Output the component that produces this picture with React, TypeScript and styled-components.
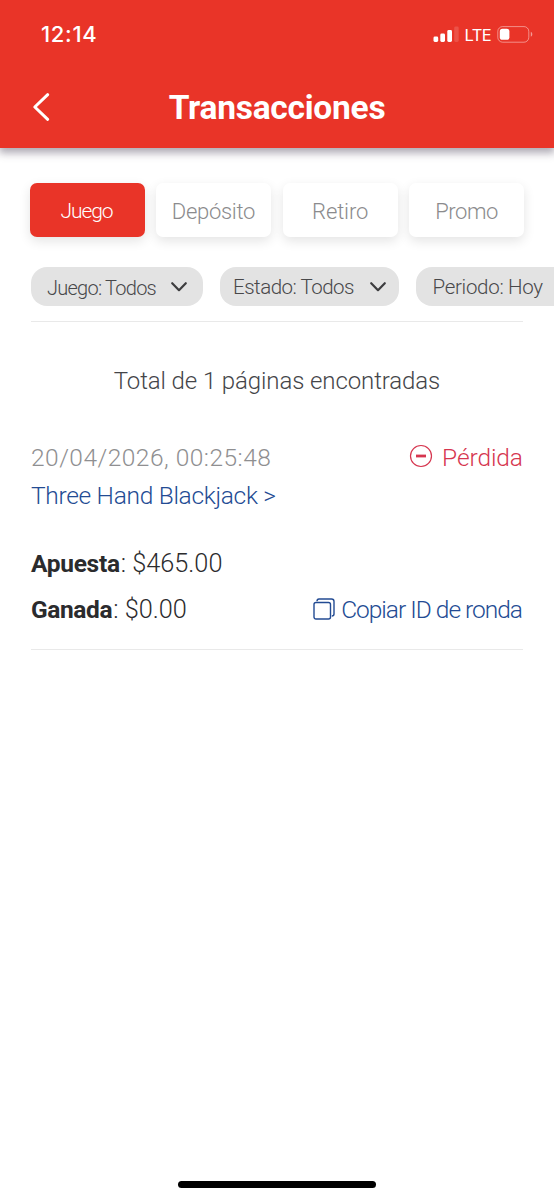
import React from "react";
import styled, { createGlobalStyle } from "styled-components";

const GlobalStyle = createGlobalStyle`
  * { box-sizing: border-box; }
  body { margin: 0; background: #fff; overflow: hidden; }
`;

const Screen = styled.div`
  width: 554px;
  height: 1200px;
  display: flex;
  flex-direction: column;
  overflow: hidden;
  background: #fff;
  font-family: Roboto, "Liberation Sans", sans-serif;
  font-weight: 300;
  color: #444549;
`;

const Header = styled.header`
  flex: none;
  height: 148px;
  background: #e93428;
  color: #fff;
  box-shadow: 0 4px 8px 1px rgba(60, 50, 75, 0.42);
`;

const StatusBar = styled.div`
  height: 68px;
  display: flex;
  align-items: center;
  justify-content: space-between;
  padding: 0 21px 0 41px;
  font-family: Inter, sans-serif;
`;

const Label = styled.span<{ $spacing?: number }>`
  white-space: nowrap;
  letter-spacing: ${(p) => p.$spacing ?? 0}px;
  margin-right: ${(p) => -(p.$spacing ?? 0)}px;
`;

const Clock = styled(Label)`
  font-size: 22px;
  font-weight: 500;
`;

const Indicators = styled.div`
  display: flex;
  align-items: center;
`;

const Network = styled(Label)`
  font-size: 16.5px;
  font-weight: 400;
  margin: 1px 6px 0 5px;
`;

const TitleBar = styled.div`
  height: 80px;
  display: grid;
  grid-template-columns: 60px 1fr 60px;
  align-items: center;
`;

const BackButton = styled.button`
  border: 0;
  padding: 0 0 2px 31px;
  background: none;
  color: inherit;
  display: flex;
`;

const Title = styled.h1<{ $spacing: number }>`
  margin: 0;
  text-align: center;
  font-size: 33.5px;
  line-height: 80px;
  font-weight: 700;
  letter-spacing: ${(p) => p.$spacing}px;
`;

const Tabs = styled.nav`
  display: grid;
  grid-template-columns: repeat(4, 115px);
  column-gap: 11.6px;
  margin: 35px 0 0 29.5px;
`;

const Tab = styled.button<{ $active?: boolean; $size?: number }>`
  height: 54px;
  border: 0;
  border-radius: 7px;
  padding: 2px 0 0;
  font: 300 ${(p) => p.$size ?? 22}px Roboto, sans-serif;
  color: ${(p) => (p.$active ? "#fff" : "#8b8b8d")};
  background: ${(p) => (p.$active ? "#e93428" : "#fff")};
  box-shadow: 0 4px 12px rgba(0, 0, 0, 0.11);
`;

const Filters = styled.div`
  display: flex;
  gap: 17.5px;
  margin: 30px 0 0 31px;
`;

const Filter = styled.button<{ $width: number; $drop?: number; $inset: number; $end?: number; $size: number }>`
  flex: none;
  width: ${(p) => p.$width}px;
  height: 39px;
  border: 0;
  border-radius: 16px;
  display: flex;
  align-items: center;
  justify-content: space-between;
  padding: 0 ${(p) => p.$end ?? 14}px 0 ${(p) => p.$inset}px;
  background: #e3e3e3;
  color: #48484a;
  font: 300 ${(p) => p.$size}px Roboto, sans-serif;

  ${Label} { padding-top: ${(p) => p.$drop ?? 0}px; }
`;

const Content = styled.main`
  margin: 15px 31px 0;
  border-top: 1px solid #e9e9e9;
`;

const Summary = styled.p`
  margin: 41px 0 0;
  text-align: center;
  font-size: 24px;
  line-height: 36px;
`;

const Transaction = styled.article`
  margin-top: 39px;
  padding-bottom: 17px;
  border-bottom: 1px solid #e9e9e9;
  font-size: 24.5px;
`;

const Row = styled.div<{ $height: number }>`
  display: flex;
  align-items: center;
  justify-content: space-between;
  height: ${(p) => p.$height}px;
`;

const DateText = styled(Label)`
  color: #8f8f91;
`;

const Status = styled.span`
  display: flex;
  align-items: center;
  gap: 9px;
  color: #d6364f;

  svg { margin-bottom: 2px; }
`;

const Link = styled.a`
  display: flex;
  align-items: center;
  gap: 6px;
  color: #234b93;
`;

const Amounts = styled.div`
  margin-top: 26px;
  color: #2b2b2d;
`;

const Amount = styled(Label)`
  font-size: 25.3px;
`;

const Strong = styled.b<{ $spacing: number }>`
  margin-right: 1px;
  font-size: 24.5px;
  font-weight: 700;
  letter-spacing: ${(p) => p.$spacing}px;
`;

const HomeIndicator = styled.div`
  flex: none;
  width: 198px;
  height: 7.5px;
  border-radius: 4px;
  background: #000;
  margin: auto auto 12px 178.3px;
`;

const Chevron = () => (
  <svg width="18" height="12" viewBox="0 0 18 12" fill="none" stroke="#3d3d3f" strokeWidth="2.200" strokeLinecap="round" strokeLinejoin="round">
    <path d="M2.200 2.200 9 9.200l6.800-7" />
  </svg>
);

export default function App() {
  return (
    <Screen>
      <GlobalStyle />
      <Header>
        <StatusBar>
          <Clock $spacing={0.7}>12:14</Clock>
          <Indicators>
            <svg width="26" height="17" viewBox="0 0 26 17" fill="#fff">
              <rect x="0.500" y="10.500" width="4.700" height="5.500" rx="1.400" />
              <rect x="7.300" y="7.500" width="4.700" height="8.500" rx="1.400" />
              <rect x="14.300" y="4" width="4.700" height="12" rx="1.400" />
              <rect x="21.200" y="0.500" width="4.500" height="15.500" rx="1.400" opacity="0.15" />
            </svg>
            <Network $spacing={-0.6}>LTE</Network>
            <svg width="36" height="17" viewBox="0 0 36 17" fill="none">
              <rect x="0.800" y="0.600" width="31" height="15.600" rx="4.800" stroke="#fff" strokeOpacity="0.45" />
              <rect x="2.800" y="2.800" width="9.600" height="11" rx="2.600" fill="#fff" />
              <path d="M33.800 5.800v5c2-.8 2-4.200 0-5Z" fill="#fff" fillOpacity="0.5" />
            </svg>
          </Indicators>
        </StatusBar>
        <TitleBar>
          <BackButton aria-label="Atrás">
            <svg width="20" height="30" viewBox="0 0 20 30" fill="none" stroke="#fff" strokeWidth="3" strokeLinecap="round" strokeLinejoin="round">
              <path d="M16.700 2.700 3.800 15l12.900 12.300" />
            </svg>
          </BackButton>
          <Title $spacing={-0.25}>Transacciones</Title>
        </TitleBar>
      </Header>
      <Tabs>
        <Tab $active $size={21}><Label $spacing={-1.1}>Juego</Label></Tab>
        <Tab><Label $spacing={-0.3}>Depósito</Label></Tab>
        <Tab><Label $spacing={-0.15}>Retiro</Label></Tab>
        <Tab><Label $spacing={-0.4}>Promo</Label></Tab>
      </Tabs>
      <Filters>
        <Filter $width={171.5} $inset={16} $drop={2} $end={15} $size={20}><Label $spacing={-0.75}>Juego: Todos</Label><Chevron /></Filter>
        <Filter $width={178.5} $inset={13} $end={12} $size={20.5}><Label $spacing={-0.5}>Estado: Todos</Label><Chevron /></Filter>
        <Filter $width={170} $inset={16.5} $size={20.5}><Label $spacing={-0.3}>Periodo: Hoy</Label></Filter>
      </Filters>
      <Content>
        <Summary><Label $spacing={-0.1}>Total de 1 páginas encontradas</Label></Summary>
        <Transaction>
          <Row $height={38}>
            <DateText $spacing={0.48}>20/04/2026, 00:25:48</DateText>
            <Status>
              <svg width="24" height="24" viewBox="0 0 24 24" fill="none" stroke="currentColor">
                <circle cx="12" cy="12" r="10.500" strokeWidth="1.200" />
                <path d="M7 12h10" strokeWidth="2.800" />
              </svg>
              <Label $spacing={-0.1}>Pérdida</Label>
            </Status>
          </Row>
          <Row $height={38}><Link><Label $spacing={-0.3}>Three Hand Blackjack &gt;</Label></Link></Row>
          <Amounts>
            <Row $height={46}><Amount><Strong $spacing={-0.3}>Apuesta</Strong>: $465.00</Amount></Row>
            <Row $height={46}>
              <Amount><Strong $spacing={-0.4}>Ganada</Strong>: $0.00</Amount>
              <Link>
                <svg width="22" height="22" viewBox="0 0 22 22" fill="none" stroke="currentColor" strokeWidth="1.400">
                  <rect x="1" y="4.500" width="16.500" height="16.500" rx="2" />
                  <path d="M4 3.300C4 1.800 4.500 1 6 1h12.500C20.300 1 21 1.700 21 3.500V16c0 1.500-.7 2-2.200 2" />
                </svg>
                <Label $spacing={-1}>Copiar ID de ronda</Label>
              </Link>
            </Row>
          </Amounts>
        </Transaction>
      </Content>
      <HomeIndicator />
    </Screen>
  );
}
